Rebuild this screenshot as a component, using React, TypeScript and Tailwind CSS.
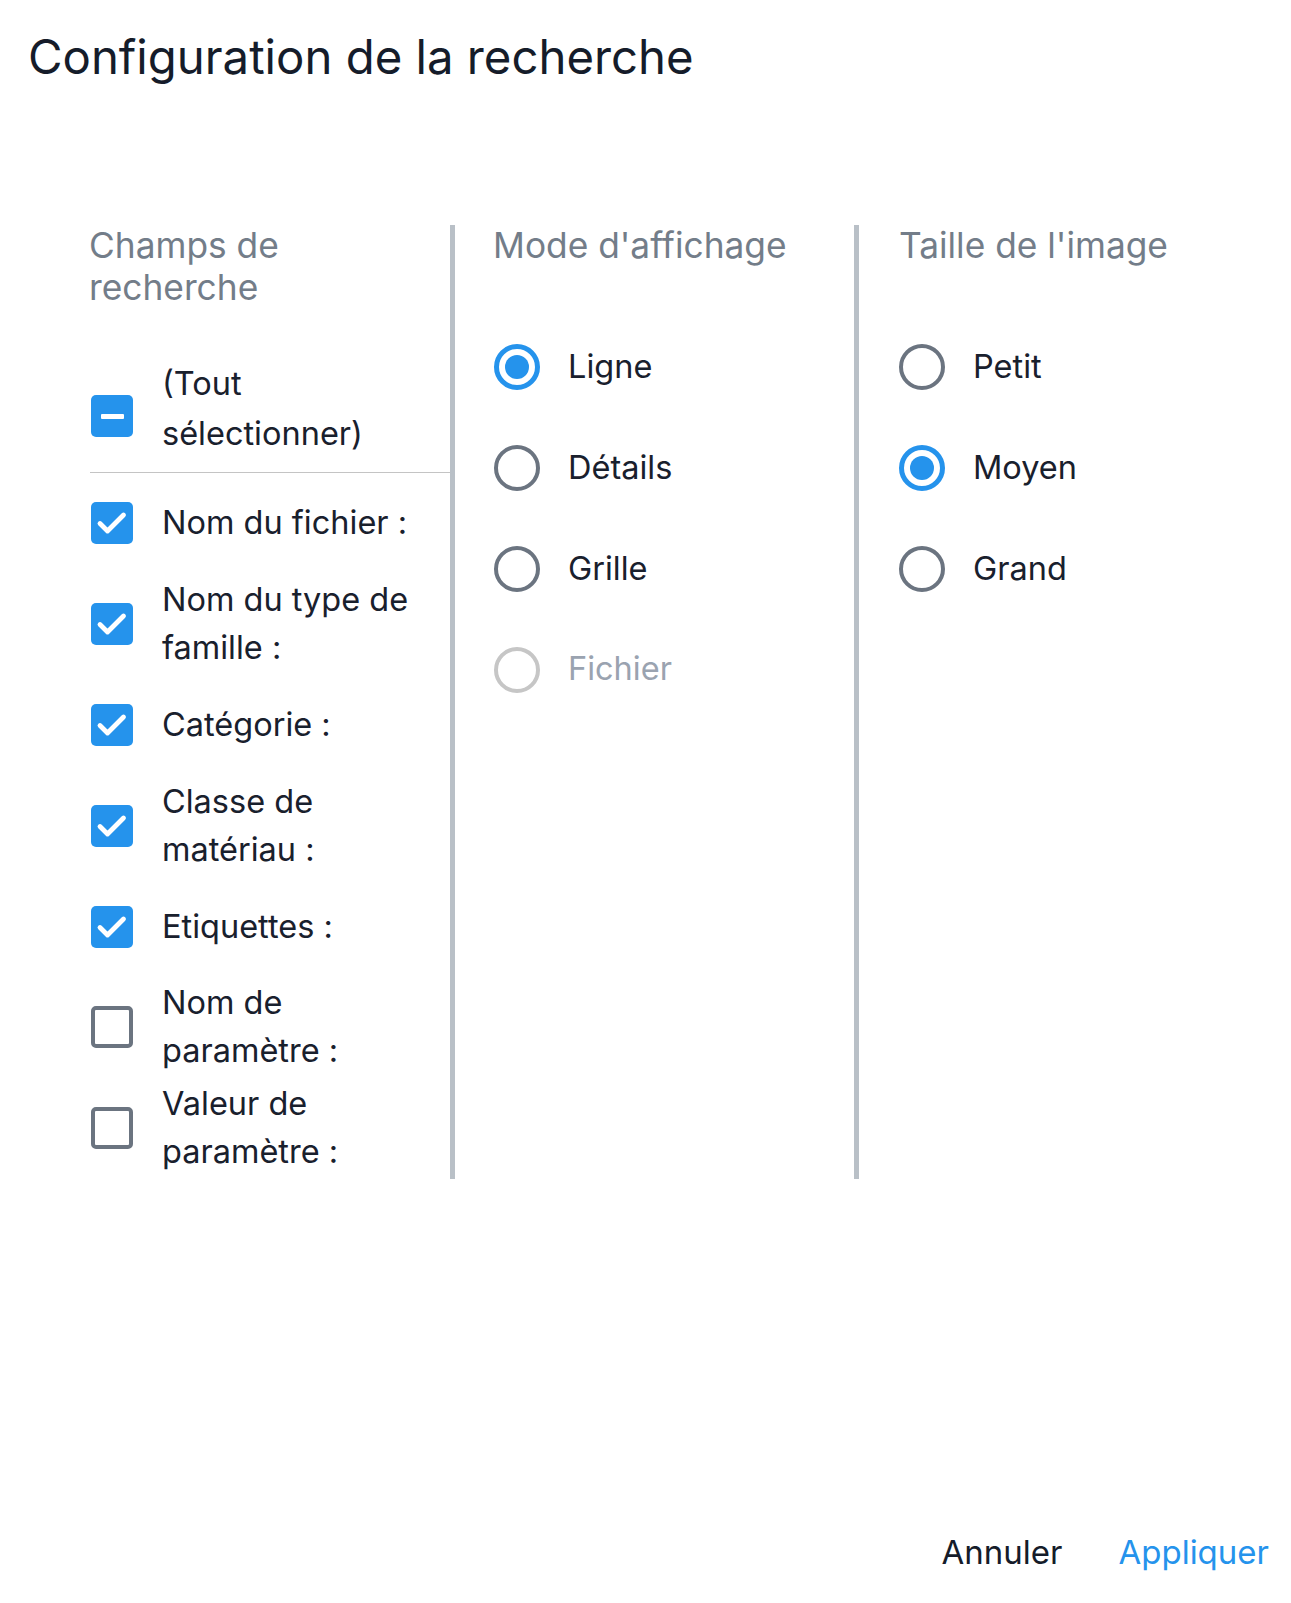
import React from "react";

const FONT = { fontFamily: "Inter, 'Noto Sans', sans-serif" };

function CheckBox({ state }: { state: "checked" | "unchecked" | "indeterminate" }) {
  if (state === "unchecked") {
    return <div className="w-[42px] h-[42px] shrink-0 rounded-[5px] border-[4.5px] border-[#6b7480] bg-white" />;
  }
  return (
    <div className="w-[42px] h-[42px] shrink-0 rounded-[5px] bg-[#2593ec] flex items-center justify-center">
      {state === "checked" ? (
        <svg width="42" height="42" viewBox="0 0 42 42">
          <polyline points="9,21.5 16.5,29 32.5,13" fill="none" stroke="#ffffff" strokeWidth="4.8" strokeLinecap="round" strokeLinejoin="round" />
        </svg>
      ) : (
        <div className="w-[23px] h-[5px] bg-white rounded-[1px]" />
      )}
    </div>
  );
}

function Radio({ state }: { state: "on" | "off" | "disabled" }) {
  if (state === "on") {
    return (
      <div className="w-[46px] h-[46px] shrink-0 rounded-full border-[5px] border-[#2593ec] flex items-center justify-center">
        <div className="w-[24px] h-[24px] rounded-full bg-[#2593ec]" />
      </div>
    );
  }
  return (
    <div
      className={
        "w-[46px] h-[46px] shrink-0 rounded-full border-[4.5px] " +
        (state === "off" ? "border-[#6b7480]" : "border-[#c6c6c6]")
      }
    />
  );
}

const fields: { label: string[]; checked: boolean }[] = [
  { label: ["Nom du fichier :"], checked: true },
  { label: ["Nom du type de", "famille :"], checked: true },
  { label: ["Catégorie :"], checked: true },
  { label: ["Classe de", "matériau :"], checked: true },
  { label: ["Etiquettes :"], checked: true },
  { label: ["Nom de", "paramètre :"], checked: false },
  { label: ["Valeur de", "paramètre :"], checked: false },
];

export default function App() {
  return (
    <div className="w-[1291px] h-[1603px] bg-white flex flex-col text-[#19202d]" style={FONT}>
      <h1 className="pl-[28px] pt-[28px] text-[47.3px] leading-[57px] font-normal text-[#151c2a]">
        Configuration de la recherche
      </h1>

      <div className="flex mt-[140px] ml-[90px]">
        {/* Column 1 */}
        <div className="w-[360px] flex flex-col">
          <div className="text-[35.3px] leading-[42px] text-[#737d89] -ml-[1px]">
            Champs de
            <br />
            recherche
          </div>
          <div className="flex items-center mt-[50px] pb-[13px] border-b border-[#c4c4c4]">
            <div className="mt-[14px] ml-[1px]">
              <CheckBox state="indeterminate" />
            </div>
            <div className="ml-[29px] text-[32.5px] leading-[50px]">
              (Tout
              <br />
              sélectionner)
            </div>
          </div>
          {fields.map((f, i) => (
            <div key={i} className="h-[100.8px] flex items-center">
              <div className="ml-[1px]">
                <CheckBox state={f.checked ? "checked" : "unchecked"} />
              </div>
              <div className="ml-[29px] text-[32.5px] leading-[48px]">
                {f.label.map((l, j) => (
                  <div key={j}>{l}</div>
                ))}
              </div>
            </div>
          ))}
        </div>

        {/* Column 2 */}
        <div className="w-[404px] border-l-[5px] border-[#b9c0c7] pl-[39px] flex flex-col">
          <div className="text-[35.3px] leading-[42px] text-[#737d89] -ml-[1px]">Mode d'affichage</div>
          <div className="mt-[50px] flex flex-col">
            {[
              ["Ligne", "on"],
              ["Détails", "off"],
              ["Grille", "off"],
              ["Fichier", "disabled"],
            ].map(([l, s]) => (
              <div key={l} className="h-[100.8px] flex items-center">
                <Radio state={s as "on" | "off" | "disabled"} />
                <span className={"ml-[28px] text-[32.5px] " + (s === "disabled" ? "text-[#9aa3b0]" : "")}>{l}</span>
              </div>
            ))}
          </div>
        </div>

        {/* Column 3 */}
        <div className="flex-1 border-l-[5px] border-[#b9c0c7] pl-[40px] flex flex-col">
          <div className="text-[35.3px] leading-[42px] text-[#737d89]">Taille de l'image</div>
          <div className="mt-[50px] flex flex-col">
            {[
              ["Petit", "off"],
              ["Moyen", "on"],
              ["Grand", "off"],
            ].map(([l, s]) => (
              <div key={l} className="h-[100.8px] flex items-center">
                <Radio state={s as "on" | "off"} />
                <span className="ml-[28px] text-[32.5px]">{l}</span>
              </div>
            ))}
          </div>
        </div>
      </div>

      <div className="mt-auto pb-[26px] pr-[22px] flex justify-end items-center gap-[56px] text-[33px] leading-[50px]">
        <span className="text-[#151c2a]">Annuler</span>
        <span className="text-[#2593ec]">Appliquer</span>
      </div>
    </div>
  );
}
